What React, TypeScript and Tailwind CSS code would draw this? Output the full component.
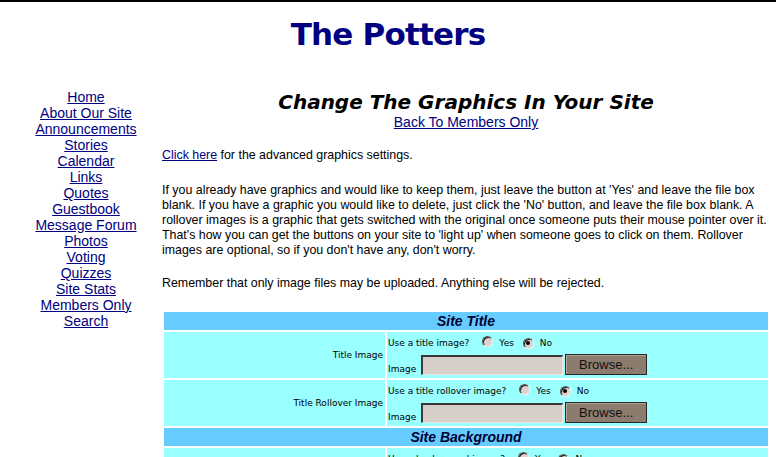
const LINKS = [
  'Home',
  'About Our Site',
  'Announcements',
  'Stories',
  'Calendar',
  'Links',
  'Quotes',
  'Guestbook',
  'Message Forum',
  'Photos',
  'Voting',
  'Quizzes',
  'Site Stats',
  'Members Only',
  'Search',
]

// old-school 3D radio button
function Radio({ checked }: { checked?: boolean }) {
  return (
    <span className="inline-flex h-[11px] w-[11px] shrink-0 items-center justify-center rounded-full border border-t-[#5a5a5a] border-l-[#5a5a5a] border-b-[#f2eeea] border-r-[#f2eeea] bg-[#ddd3ce] shadow-[inset_1px_1px_0_#1e1e1e]">
      {checked && <span className="h-[4px] w-[4px] rounded-full bg-black" />}
    </span>
  )
}

function SectionHeader({ title }: { title: string }) {
  return (
    <div className="col-span-2 flex h-[18px] items-center justify-center bg-[#66ccff] font-['Liberation_Sans',Arial,sans-serif] text-[14px] font-bold italic text-[#000033]">
      {title}
    </div>
  )
}

function ImageRow({ label, question }: { label: string; question: string }) {
  return (
    <>
      <div className="flex h-[46px] items-center justify-end bg-[#99ffff] pr-[2px] pt-[1px]">
        {label}
      </div>
      <div className="h-[46px] bg-[#99ffff] pl-[1px] pt-[1px]">
        <div className="flex h-[20px] items-center">
          <span>{question}</span>
          <span className="ml-[13px]"><Radio /></span>
          <span className="ml-[6px]">Yes</span>
          <span className="ml-[9px]"><Radio checked /></span>
          <span className="ml-[6px]">No</span>
        </div>
        <div className="flex h-[22px] items-end">
          <span className="leading-[11px]">Image</span>
          <div className="ml-[5px] h-[20px] w-[142px] border-t-2 border-l-2 border-r border-b border-t-[#3a3a3a] border-l-[#3a3a3a] border-r-[#ece6e0] border-b-[#ece6e0] bg-[#d6cec7]" />
          <div className="ml-[2px] flex h-[21px] w-[82px] items-center justify-center border border-[#262626] bg-[#8b7c6d] font-['Liberation_Sans',Arial,sans-serif] text-[13px] text-[#111] shadow-[inset_1px_1px_0_#b3a596]">
            Browse...
          </div>
        </div>
      </div>
    </>
  )
}

export default function App() {
  return (
    <div className="h-[457px] overflow-hidden border-t-2 border-black bg-white font-['Liberation_Sans',Arial,sans-serif] text-black">
      <h1 className="mt-[17px] text-center font-['DejaVu_Sans',Verdana,sans-serif] text-[31px] font-bold leading-[31px] tracking-[-0.8px] text-[#000080]">
        The Potters
      </h1>

      <div className="mt-[39px] flex">
        {/* left nav */}
        <nav className="ml-[10px] flex w-[152px] flex-col items-center text-[14px] leading-[16px]">
          {LINKS.map((l) => (
            <a key={l} href="#" className="text-[#000080] underline">
              {l}
            </a>
          ))}
        </nav>

        <main className="w-[608px]">
          <h2 className="mt-[1px] text-center font-['DejaVu_Sans',Verdana,sans-serif] text-[20px] font-bold italic leading-[24px]">
            Change The Graphics In Your Site
          </h2>
          <div className="text-center text-[14px] leading-[16px]">
            <a href="#" className="text-[#000080] underline">Back To Members Only</a>
          </div>

          <div className="text-[12.4px] leading-[15px]">
            <p className="mt-[18px]">
              <a href="#" className="text-[#000080] underline">Click here</a> for the advanced graphics settings.
            </p>
            <p className="mt-[20px] whitespace-nowrap">
              If you already have graphics and would like to keep them, just leave the button at 'Yes' and leave the file box
              <br />
              blank. If you have a graphic you would like to delete, just click the 'No' button, and leave the file box blank. A
              <br />
              rollover images is a graphic that gets switched with the original once someone puts their mouse pointer over it.
              <br />
              That's how you can get the buttons on your site to 'light up' when someone goes to click on them. Rollover
              <br />
              images are optional, so if you don't have any, don't worry.
            </p>
            <p className="mt-[18px]">Remember that only image files may be uploaded. Anything else will be rejected.</p>
          </div>

          <div className="ml-[2px] mt-[21px] grid grid-cols-[221px_381px] gap-[2px] font-['DejaVu_Sans',Verdana,sans-serif] text-[9px] leading-[11px]">
            <SectionHeader title="Site Title" />
            <ImageRow label="Title Image" question="Use a title image?" />
            <ImageRow label="Title Rollover Image" question="Use a title rollover image?" />
            <SectionHeader title="Site Background" />
            <ImageRow label="Background Image" question="Use a background image?" />
          </div>
        </main>
      </div>
    </div>
  )
}
